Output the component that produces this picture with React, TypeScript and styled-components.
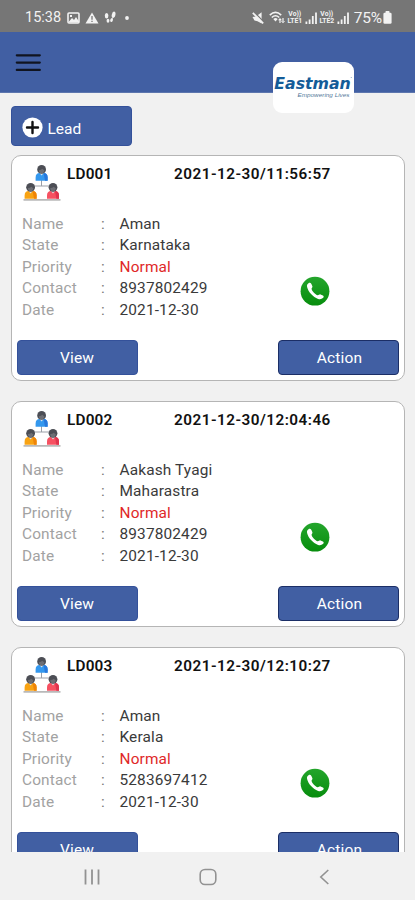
import React from "react";
import styled, { createGlobalStyle, css } from "styled-components";

const GlobalStyle = createGlobalStyle`
  *, *::before, *::after { box-sizing: border-box; }
  body { margin: 0; background: #f1f1f1; font-family: Roboto, sans-serif; overflow: hidden; }
  button { font-family: inherit; margin: 0; padding: 0; }
`;

const Screen = styled.div`
  width: 415px;
  height: 900px;
  display: flex;
  flex-direction: column;
  background: #f1f1f1;
  overflow: hidden;
`;

const StatusBar = styled.div`
  flex: none;
  height: 32px;
  display: flex;
  align-items: center;
  justify-content: space-between;
  padding: 3px 23px 0 25px;
  background: #767676;
  color: #f2f2f2;
`;

const StatusGroup = styled.div`
  display: flex;
  align-items: center;
  height: 20px;
  svg { display: block; flex: none; }
`;

const LeftStatus = styled(StatusGroup)`
  gap: 5px;
  svg:last-child { margin-left: 4px; }
`;

const RightStatus = styled(StatusGroup)`
  svg:first-child { margin-right: 5px; }
`;

const Clock = styled.span`
  font-size: 14.5px;
  line-height: 20px;
  width: 37px;
`;

const Percent = styled.span`
  font-size: 15.5px;
  line-height: 20px;
  letter-spacing: -0.2px;
  margin: 0 1px 0 4px;
`;

const Network = styled.span`
  display: flex;
  flex-direction: column;
  align-items: center;
  width: 18px;
  font-size: 6.8px;
  line-height: 7px;
  font-weight: 700;
`;

const Header = styled.header`
  flex: none;
  height: 61px;
  display: flex;
  align-items: flex-start;
  justify-content: space-between;
  padding: 20px 61px 0 15px;
  background: #415fa3;
  border-bottom: 1px solid #5d76ae;
`;

const MenuButton = styled.button`
  display: block;
  border: 0;
  background: none;
  height: 20px;
  svg { display: block; }
`;

const Logo = styled.div`
  width: 81px;
  height: 51px;
  margin-top: 10px;
  border-radius: 9px;
  background: #fff;
  z-index: 1;
  svg { display: block; }
`;

const Content = styled.main`
  flex: 1;
  min-height: 0;
  overflow: hidden;
  padding: 12.5px 10.5px 0;
`;

const LeadButton = styled.button`
  display: flex;
  align-items: center;
  gap: 4.5px;
  width: 121px;
  height: 40.5px;
  padding: 3px 0 0 10.5px;
  border: 1px solid #34519a;
  border-radius: 4px;
  background: #415fa3;
  color: #fff;
  font-size: 15.5px;
  svg { display: block; }
  span { padding-top: 3px; }
`;

const CardList = styled.div`
  display: flex;
  flex-direction: column;
  gap: 20px;
  margin-top: 9px;
`;

const Card = styled.article`
  height: 226px;
  flex: none;
  border: 1px solid #b5b5b5;
  border-radius: 10px;
  background: #fff;
  padding: 7.5px 5px 5px;
  display: flex;
  flex-direction: column;
`;

const CardHeader = styled.div`
  display: flex;
  height: 50.5px;
  padding-left: 6px;
  color: #111;
  font-weight: 600;
  font-size: 15.3px;
  line-height: 21px;
  svg { display: block; }
`;

const LeadId = styled.span`
  width: 107px;
  margin-left: 6.5px;
  letter-spacing: 0.2px;
`;

const Stamp = styled.span`
  letter-spacing: 0.48px;
`;

const Details = styled.div`
  display: flex;
  height: 126px;
  padding-left: 5.5px;
`;

const FieldList = styled.dl`
  margin: 0;
  width: 277.5px;
  display: grid;
  grid-template-columns: 79px 18.5px 1fr;
  grid-auto-rows: 21.5px;
  font-size: 15.4px;
  line-height: 21px;
  letter-spacing: 0.15px;
`;

const FieldName = styled.dt`
  color: #a2a2a2;
`;

const Colon = styled.span`
  color: #777;
`;

const FieldValue = styled.dd<{ $alert?: boolean }>`
  margin: 0;
  color: ${(p) => (p.$alert ? "#e02828" : "#3a3a3a")};
`;

const CallButton = styled.button`
  border: 0;
  background: none;
  width: 30px;
  height: 31px;
  margin-top: 62.5px;
  svg { display: block; }
`;

const CardActions = styled.div`
  display: flex;
  justify-content: space-between;
`;

const ActionButton = styled.button<{ $outlined?: boolean }>`
  width: 121px;
  height: 35.5px;
  border-radius: 4px;
  border: 1px solid #34519a;
  background: #415fa3;
  color: #fff;
  font-size: 15.5px;
  padding-top: 2px;
  letter-spacing: 0.15px;
  ${(p) =>
    p.$outlined &&
    css`
      border-color: #1b2e66;
      padding-left: 3px;
    `}
`;

const NavBar = styled.nav`
  flex: none;
  height: 48px;
  padding-top: 2px;
  display: grid;
  grid-template-columns: 116px 116px 116px;
  justify-content: center;
  justify-items: center;
  align-items: center;
  background: #f1f1f1;
  svg { display: block; }
`;

const PictureIcon = () => (
  <svg width="13" height="12" viewBox="0 0 13 12">
    <rect x="1" y="1" width="11" height="10" rx="1" fill="none" stroke="#f2f2f2" strokeWidth="1.6" />
    <path d="M2 9.5 5 6l2 2 2-3 3 4.5v1H2zM3 3h2v2H3z" fill="#f2f2f2" />
  </svg>
);

const WarningIcon = () => (
  <svg width="14" height="12" viewBox="0 0 14 12">
    <path d="M7 .5 13.5 11.5H.5z" fill="#f2f2f2" />
    <path d="M7 4v3.7M7 8.7v1.3" stroke="#767676" strokeWidth="1.3" />
  </svg>
);

const StepsIcon = () => (
  <svg width="12" height="13" viewBox="0 0 12 13" fill="#f2f2f2">
    <ellipse cx="2.6" cy="4.7" rx="1.8" ry="2.7" />
    <ellipse cx="4" cy="9.8" rx="1.4" ry="2" />
    <ellipse cx="9.6" cy="3.8" rx="1.8" ry="3.3" transform="rotate(12 9.6 3.8)" />
    <ellipse cx="7.6" cy="9" rx="1.3" ry="2" transform="rotate(20 7.6 9)" />
  </svg>
);

const DotIcon = () => (
  <svg width="4" height="4" viewBox="0 0 4 4">
    <circle cx="2" cy="2" r="1.9" fill="#f2f2f2" />
  </svg>
);

const MuteIcon = () => (
  <svg width="12" height="12" viewBox="0 0 12 12">
    <path d="M.5 5 4 4.6 9.6.3v11.2L5.5 9.3 2.5 8.5z" fill="#f2f2f2" />
    <path d="M2.5.6 12 10.2" stroke="#767676" strokeWidth="1.4" />
    <path d="M.8.8 11.2 11.4" stroke="#f2f2f2" strokeWidth="1.8" />
  </svg>
);

const WifiIcon = () => (
  <svg width="17" height="13" viewBox="0 0 17 13">
    <path d="M.8 4.2Q6.5-1.3 12.2 4.2M2.8 6.5q3.7-3.5 7.4 0" fill="none" stroke="#f2f2f2" strokeWidth="1.6" />
    <path d="M4.3 8q2.2-2 4.4 0L6.5 10.5zM9 9.2l2-2.2 2 2.2zM12 10l2 2.2 2-2.2zM10.4 9h1.2v3h-1.2zM13.4 7h1.2v3.5h-1.2z" fill="#f2f2f2" />
  </svg>
);

const SignalIcon = () => (
  <svg width="14" height="12" viewBox="0 0 14 12" fill="#f2f2f2">
    <path d="M1.5 9.5h1.8V12H1.5zM4.7 7.5h1.8V12H4.7zM7.9 4h1.8v8H7.9zM11.1.6h1.8V12h-1.8z" />
  </svg>
);

const BatteryIcon = () => (
  <svg width="9" height="13" viewBox="0 0 9 13" fill="#f2f2f2">
    <rect x="2.5" y="0" width="4" height="3" rx=".7" />
    <rect x=".4" y="1.8" width="8.2" height="11" rx="1.3" />
  </svg>
);

const MenuIcon = () => (
  <svg width="27" height="20" viewBox="0 0 27 20">
    <path d="M1.8 3.3h23M1.8 10.6h23M1.8 17.9h23" stroke="#101420" strokeWidth="2.2" strokeLinecap="round" />
  </svg>
);

const LogoMark = () => (
  <svg width="81" height="51" viewBox="0 0 81 51">
    <text x="1.3" y="27" fill="#145c98" fontFamily="DejaVu Sans, sans-serif" fontStyle="italic" fontWeight="700" fontSize="16.5" textLength="76.5" lengthAdjust="spacingAndGlyphs">Eastman</text>
    <text x="24.5" y="35" fill="#557b9b" fontFamily="Liberation Sans, sans-serif" fontStyle="italic" fontSize="6" textLength="52" lengthAdjust="spacingAndGlyphs">Empowering Lives</text>
    <circle cx="78.3" cy="15.5" r=".6" fill="#8aa9c4" />
  </svg>
);

const PlusIcon = () => (
  <svg width="21" height="21" viewBox="0 0 21 21">
    <circle cx="10.5" cy="10.5" r="10.1" fill="#fff" />
    <path d="M10.5 5v11M5 10.5h11" stroke="#111" strokeWidth="2.4" strokeLinecap="round" />
  </svg>
);

const Person = ({ x, y, color, side }: { x: number; y: number; color: string; side: string }) => (
  <g transform={`translate(${x} ${y})`}>
    <path d="M-6 15.8v-3.2Q-6 8-2 8h4Q6 8 6 12.6v3.2z" fill={color} />
    <path d="M2 8Q6 8 6 12.6v3.2H3.4z" fill={side} />
    <path d="M-2 8 0 10.5 2 8z" fill="#dfe2e8" />
    <circle cy="4.4" r="4.4" fill="#4c4e55" />
    <path d="M-2.7 5.2q2.2 0 3.5-1.4 1 1.2 2 1.3Q2.5 8.5 0 8.5T-2.7 5.2z" fill="#6d6e74" />
  </g>
);

const TeamIcon = () => (
  <svg width="38" height="38" viewBox="0 0 38 38">
    <path d="M18.5 15v7M11 22h17" fill="none" stroke="#9b9fa7" strokeWidth="1" />
    <path d="M.5 35.8h37" stroke="#b9b9b9" strokeWidth="1.8" />
    <Person x={18.6} y={1} color="#3498ee" side="#2878dc" />
    <Person x={7.6} y={18.9} color="#f8a313" side="#ef8408" />
    <Person x={30} y={18.9} color="#f65161" side="#df344e" />
  </svg>
);

const CallIcon = () => (
  <svg width="30" height="31" viewBox="0 0 30 31">
    <defs>
      <linearGradient id="callFill" x1="0" y1="0" x2="0" y2="1">
        <stop offset="0" stopColor="#24a52c" />
        <stop offset="1" stopColor="#078d0d" />
      </linearGradient>
    </defs>
    <circle cx="15" cy="15.2" r="14.4" fill="url(#callFill)" />
    <path d="M8.5 7.2c1.2-.9 2.2-.5 2.9.7l1 2.3c.4 1.1-1 1.8-.8 2.8.6 2.4 3.6 5.5 6.1 6.3.9.2 1.7-1.3 2.8-.9l2.4 1c1.2.6.9 1.9 0 2.7-1.3 1.2-3 1.4-4.8.8C13 21 8.2 16 7.1 11c-.4-1.7.1-3 1.4-3.8z" fill="#fff" />
  </svg>
);

const RecentsIcon = () => (
  <svg width="18" height="18" viewBox="0 0 18 18">
    <path d="M2.5 1.5v15M9 1.5v15M15.5 1.5v15" stroke="#929292" strokeWidth="1.8" />
  </svg>
);

const HomeIcon = () => (
  <svg width="18" height="18" viewBox="0 0 18 18">
    <rect x="1.2" y="1.5" width="15.6" height="15" rx="4.8" fill="none" stroke="#929292" strokeWidth="1.6" />
  </svg>
);

const BackIcon = () => (
  <svg width="10" height="18" viewBox="0 0 10 18">
    <path d="m9.3 2-7.5 7 7.5 7" fill="none" stroke="#929292" strokeWidth="1.6" />
  </svg>
);

const leads = [
  { id: "LD001", stamp: "2021-12-30/11:56:57", name: "Aman", state: "Karnataka", contact: "8937802429" },
  { id: "LD002", stamp: "2021-12-30/12:04:46", name: "Aakash Tyagi", state: "Maharastra", contact: "8937802429" },
  { id: "LD003", stamp: "2021-12-30/12:10:27", name: "Aman", state: "Kerala", contact: "5283697412" },
];

const Field = ({ label, value, alert }: { label: string; value: string; alert?: boolean }) => (
  <>
    <FieldName>{label}</FieldName>
    <Colon>:</Colon>
    <FieldValue $alert={alert}>{value}</FieldValue>
  </>
);

const LeadCard = ({ lead }: { lead: (typeof leads)[number] }) => (
  <Card>
    <CardHeader>
      <TeamIcon />
      <LeadId>{lead.id}</LeadId>
      <Stamp>{lead.stamp}</Stamp>
    </CardHeader>
    <Details>
      <FieldList>
        <Field label="Name" value={lead.name} />
        <Field label="State" value={lead.state} />
        <Field label="Priority" value="Normal" alert />
        <Field label="Contact" value={lead.contact} />
        <Field label="Date" value="2021-12-30" />
      </FieldList>
      <CallButton aria-label="Call"><CallIcon /></CallButton>
    </Details>
    <CardActions>
      <ActionButton>View</ActionButton>
      <ActionButton $outlined>Action</ActionButton>
    </CardActions>
  </Card>
);

export default function App() {
  return (
    <Screen>
      <GlobalStyle />
      <StatusBar>
        <LeftStatus>
          <Clock>15:38</Clock>
          <PictureIcon />
          <WarningIcon />
          <StepsIcon />
          <DotIcon />
        </LeftStatus>
        <RightStatus>
          <MuteIcon />
          <WifiIcon />
          <Network><span>Vo))</span><span>LTE1</span></Network>
          <SignalIcon />
          <Network><span>Vo))</span><span>LTE2</span></Network>
          <SignalIcon />
          <Percent>75%</Percent>
          <BatteryIcon />
        </RightStatus>
      </StatusBar>
      <Header>
        <MenuButton aria-label="Menu"><MenuIcon /></MenuButton>
        <Logo><LogoMark /></Logo>
      </Header>
      <Content>
        <LeadButton><PlusIcon /><span>Lead</span></LeadButton>
        <CardList>
          {leads.map((lead) => <LeadCard key={lead.id} lead={lead} />)}
        </CardList>
      </Content>
      <NavBar>
        <RecentsIcon />
        <HomeIcon />
        <BackIcon />
      </NavBar>
    </Screen>
  );
}
